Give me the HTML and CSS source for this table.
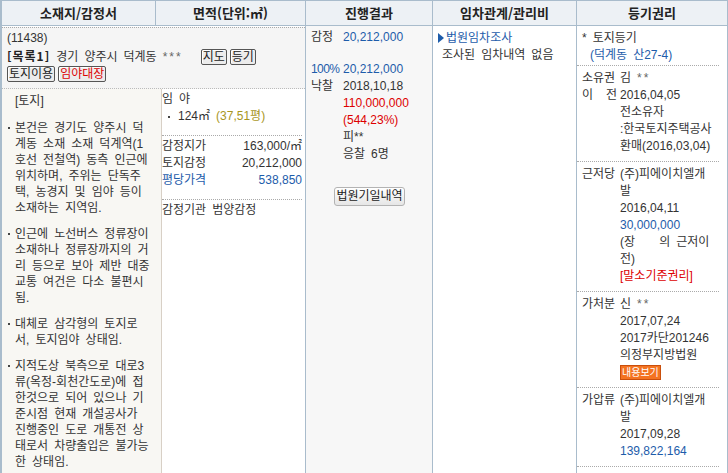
FILE: index.html
```html
<!DOCTYPE html>
<html lang="ko">
<head>
  <meta charset="UTF-8" />
  <meta name="viewport" content="width=device-width, initial-scale=1" />
  <title>물건 상세</title>
  <link rel="stylesheet" href="styles.css">
</head>
<body>

  <div class="board">
    <div class="thead">
      <div class="th">소재지/감정서</div>
      <div class="th">면적(단위:㎡)</div>
      <div class="th">진행결과</div>
      <div class="th">임차관계/관리비</div>
      <div class="th">등기권리</div>
    </div>

    <div class="tbody">
      <div class="cell-main">
        <div class="addr">
          <div>(11438)</div>
          <div><b>[목록1]</b> 경기 양주시 덕계동 <span class="mask">***</span><span class="sbtn first">지도</span><span class="sbtn">등기</span></div>
          <div><span class="sbtn">토지이용</span><span class="sbtn red">임야대장</span></div>
        </div>

        <div class="detail">
          <div class="memo">
            <p class="memo-title">[토지]</p>
            <ul>
              <li>본건은 경기도 양주시 덕<br>계동 소재 소재 덕계역(1<br>호선 전철역) 동측 인근에<br>위치하며, 주위는 단독주<br>택, 농경지 및 임야 등이<br>소재하는 지역임.</li>
              <li>인근에 노선버스 정류장이<br>소재하나 정류장까지의 거<br>리 등으로 보아 제반 대중<br>교통 여건은 다소 불편시<br>됨.</li>
              <li>대체로 삼각형의 토지로<br>서, 토지임야 상태임.</li>
              <li>지적도상 북측으로 대로3<br>류(옥정-회천간도로)에 접<br>한것으로 되어 있으나 기<br>준시점 현재 개설공사가<br>진행중인 도로 개통전 상<br>태로서 차량출입은 불가능<br>한 상태임.</li>
            </ul>
          </div>

          <div class="area">
            <div class="area-block">
              <div>임 야</div>
              <div class="area-item">124㎡ <span class="olive">(37,51평)</span></div>
            </div>
            <div class="area-block">
              <div class="kv"><span>감정지가</span><span>163,000/㎡</span></div>
              <div class="kv"><span>토지감정</span><span>20,212,000</span></div>
              <div class="kv blue"><span>평당가격</span><span>538,850</span></div>
            </div>
            <div class="area-block last">감정기관 범양감정</div>
          </div>
        </div>
      </div>

      <div class="cell-result">
        <div class="res-row"><span>감정</span><span class="blue">20,212,000</span></div>
        <div class="res-row gap"><span class="blue pct">100%</span><span class="blue">20,212,000</span></div>
        <div class="res-row"><span>낙찰</span><span>2018,10,18</span></div>
        <div class="res-row"><span></span><span class="red">110,000,000</span></div>
        <div class="res-row"><span></span><span class="red">(544,23%)</span></div>
        <div class="res-row"><span></span><span>피**</span></div>
        <div class="res-row"><span></span><span>응찰 6명</span></div>
        <div class="res-btn"><button class="gbtn">법원기일내역</button></div>
      </div>

      <div class="cell-lease">
        <div class="lease-link"><i class="tri"></i>법원임차조사</div>
        <div class="lease-note">조사된 임차내역 없음</div>
      </div>

      <div class="cell-reg">
        <div class="reg top">
          <div>* 토지등기</div>
          <div class="blue indent">(덕계동 산27-4)</div>
        </div>
        <div class="reg">
          <div class="row"><span class="lbl">소유권</span><span>김 <span class="mask">**</span></span></div>
          <div class="row"><span class="lbl spread"><span>이</span><span>전</span></span><span>2016,04,05<br>전소유자<br>:한국토지주택공사<br>환매(2016,03,04)</span></div>
        </div>
        <div class="reg">
          <div class="row"><span class="lbl">근저당</span><span>(주)피에이치엘개<br>발<br>2016,04,11<br><span class="blue">30,000,000</span><br>(장&nbsp;&nbsp;&nbsp;&nbsp;의 근저이<br>전)<br><span class="red">[말소기준권리]</span></span></div>
        </div>
        <div class="reg">
          <div class="row"><span class="lbl">가처분</span><span>신 <span class="mask">**</span><br>2017,07,24<br>2017카단201246<br>의정부지방법원<br><span class="obtn">내용보기</span></span></div>
        </div>
        <div class="reg">
          <div class="row"><span class="lbl">가압류</span><span>(주)피에이치엘개<br>발<br>2017,09,28<br><span class="blue">139,822,164</span></span></div>
        </div>
      </div>
    </div>
  </div>

</body>
</html>
```

FILE: styles.css
```css
* {
  box-sizing: border-box;
}

body {
  margin: 0;
  font-family: "Liberation Sans", "Noto Sans CJK KR", sans-serif;
  font-size: 12px;
  word-spacing: 2.7px;
  color: #333;
  background: #fff;
}

.blue { color: #1d5caa; }
.red { color: #d00; }
.olive { color: #a8961e; }

.board {
  width: 728px;
  border-top: 1px solid #a9bccc;
  border-left: 2px solid #a9bccc;
  border-right: 1px solid #a9bccc;
}

.thead {
  display: grid;
  grid-template-columns: 154px 150px 127px 144px 1fr;
  background: #edf1f5;
  border-bottom: 1px solid #a9bccc;
}

.th {
  height: 24px;
  line-height: 24px;
  text-align: center;
  font-family: "Noto Sans CJK KR", sans-serif;
  font-size: 13px;
  font-weight: bold;
  word-spacing: 0;
  color: #222;
  border-right: 1px solid #a9bccc;
}

.th:last-child {
  border-right: 0;
}

.tbody {
  display: grid;
  grid-template-columns: 304px 127px 144px 1fr;
  min-height: 447px;
}

.cell-main,
.cell-result,
.cell-lease {
  border-right: 1px solid #a9bccc;
}

/* 소재지 + 면적 */
.cell-main {
  display: flex;
  flex-direction: column;
}

.addr {
  margin-top: 1px;
  border-top: 1px dotted #aaa;
  border-bottom: 1px dotted #bbb;
  background: #f5f5f5;
  padding: 2px 5px 5px 5px;
  line-height: 17px;
}

.addr b {
  font-family: "Noto Sans CJK KR", sans-serif;
  letter-spacing: 1px;
  color: #222;
}

.mask {
  color: #666;
  letter-spacing: 2px;
}

.sbtn {
  display: inline-block;
  line-height: 14px;
  padding: 0 1px;
  margin-right: 3px;
  border: 1px solid #555;
  border-radius: 2px;
  background: #ececec;
  box-shadow: inset 1px 1px 0 #fff;
  color: #222;
  word-spacing: 0;
}

.sbtn.first {
  margin-left: 18px;
}

.sbtn.red {
  color: #d00;
}

.detail {
  flex: 1;
  display: flex;
}

.memo {
  width: 160px;
  background: #f8f7f3;
  border-right: 1px solid #d8d0c6;
  padding: 4px 0 0 13px;
  line-height: 16px;
  white-space: nowrap;
}

.memo-title {
  margin: 0 0 11px;
}

.memo ul {
  margin: 0;
  padding: 0;
  list-style: none;
}

.memo li {
  position: relative;
  margin-bottom: 10px;
}

.memo li::before {
  content: "";
  position: absolute;
  left: -7px;
  top: 7px;
  width: 2px;
  height: 2px;
  background: #444;
}

.area {
  flex: 1;
  padding-right: 3px;
  line-height: 17px;
}

.area-block {
  padding: 2px 0 10px;
  border-bottom: 1px dotted #aaa;
}

.area-block.last {
  border-bottom: 0;
}

.area-item {
  position: relative;
  padding-left: 16px;
}

.area-item::before {
  content: "";
  position: absolute;
  left: 6px;
  top: 8px;
  width: 2px;
  height: 2px;
  background: #444;
}

.kv {
  display: flex;
  justify-content: space-between;
}

/* 진행결과 */
.cell-result {
  background: #f7f7f7;
  padding: 3px 0 0 5px;
  line-height: 17px;
}

.res-row {
  display: grid;
  grid-template-columns: 32px auto;
}

.res-row.gap {
  margin-top: 15px;
}

.pct {
  letter-spacing: -0.6px;
}

.res-btn {
  margin-top: 24px;
  padding-right: 4px;
  text-align: center;
}

.gbtn {
  font-family: "Liberation Sans", "Noto Sans CJK KR", sans-serif;
  font-size: 12px;
  color: #222;
  height: 19px;
  line-height: 15px;
  padding: 0 1px;
  border: 1px solid #b3b3b3;
  border-radius: 3px;
  background: linear-gradient(#ffffff, #e6e6e6);
}

/* 임차관계 */
.cell-lease {
  padding: 4px 0 0 5px;
  line-height: 17px;
}

.lease-link {
  color: #1d5caa;
}

.tri {
  display: inline-block;
  width: 0;
  height: 0;
  border-left: 6px solid #1d5caa;
  border-top: 5px solid transparent;
  border-bottom: 5px solid transparent;
  margin-right: 2px;
  vertical-align: -1px;
}

.lease-note {
  padding-left: 4px;
}

/* 등기권리 */
.cell-reg {
  padding-right: 8px;
  line-height: 17px;
  white-space: nowrap;
}

.reg {
  padding: 4px 0 6px 5px;
  border-bottom: 1px dotted #aaa;
}

.reg.top {
  padding-bottom: 1px;
}

.indent {
  padding-left: 8px;
}

.row {
  display: grid;
  grid-template-columns: 38px auto;
}

.lbl.spread {
  display: flex;
  justify-content: space-between;
  width: 35px;
}

.obtn {
  display: inline-block;
  font-size: 10px;
  line-height: 13px;
  padding: 0 1px;
  margin-top: 1px;
  border: 1px solid #c94f0c;
  background: #f47321;
  color: #fff;
}
```
